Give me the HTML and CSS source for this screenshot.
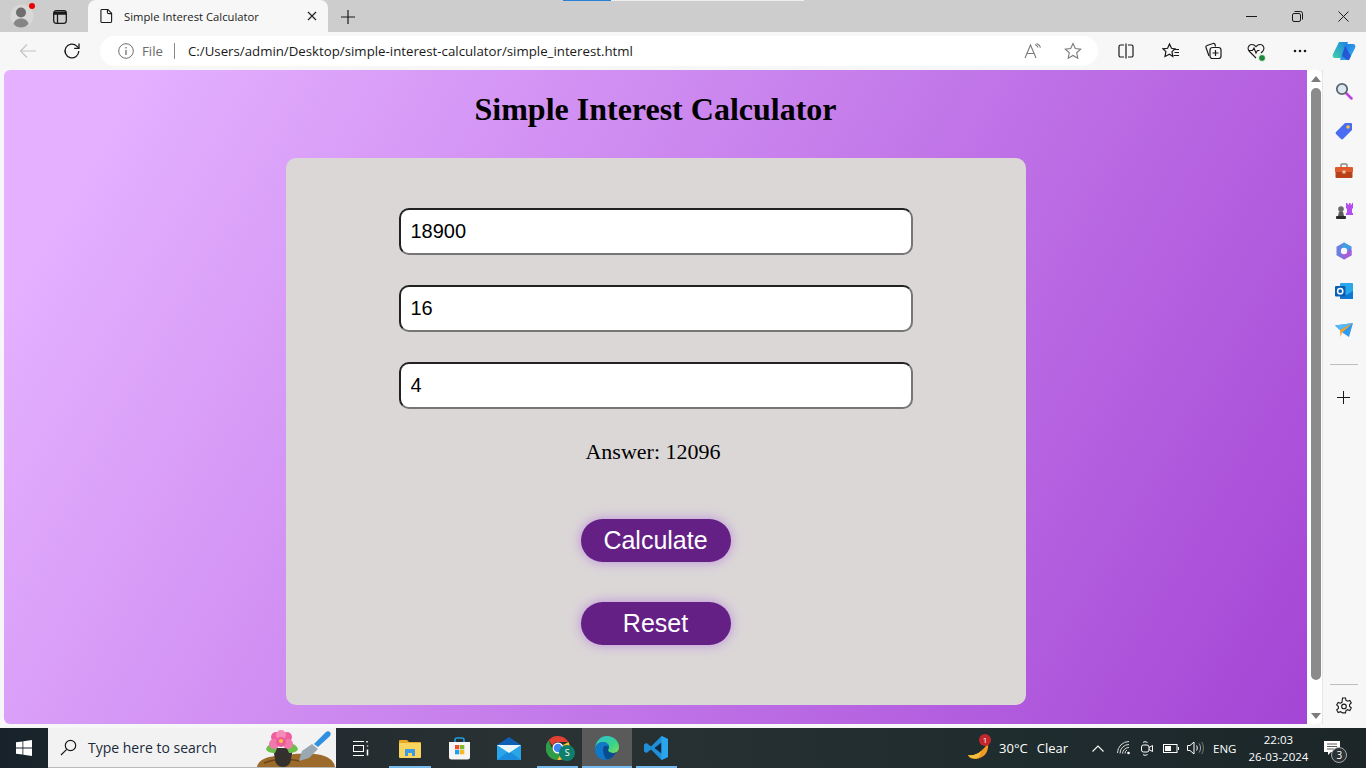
FILE: index.html
```html
<!DOCTYPE html>
<html lang="en">
<head>
    <meta charset="UTF-8">
    <title>Simple Interest Calculator</title>
    <link rel="stylesheet" href="styles.css">
</head>
<body>

<div class="tabstrip">
    <div class="load-strip"><span class="load-blue"></span><span class="load-gray"></span></div>
    <div class="avatar">
        <svg width="24" height="24" viewBox="0 0 24 24"><circle cx="12" cy="12" r="11.5" fill="#d8d8d8"/><circle cx="11" cy="8.5" r="5" fill="#6e6e6e"/><path d="M3.5 20c1-4 4-5.500 7.500-5.500s6.500 1.500 7.500 5.500c-2 2.500-4.500 3.500-7.500 3.500s-5.500-1-7.500-3.500z" fill="#868686"/></svg>
        <span class="avatar-dot"></span>
    </div>
    <div class="strip-btn">
        <svg width="16" height="16" viewBox="0 0 16 16" fill="none" stroke="#1a1a1a" stroke-width="1.300"><rect x="1.700" y="1.700" width="12.600" height="12.600" rx="2.500"/><path d="M1.700 5h12.600M5.500 5v9.300" /><path d="M2 2.500h12v2.500H2z" fill="#1a1a1a" stroke="none"/></svg>
    </div>
    <div class="tab">
        <svg width="13" height="16" viewBox="0 0 14 16" fill="none" stroke="#1a1a1a" stroke-width="1.200"><path d="M2 1h6.500L12.500 5v9a1 1 0 0 1-1 1h-9.500a1 1 0 0 1-1-1V2a1 1 0 0 1 1-1z"/><path d="M8 1v3a1.500 1.500 0 0 0 1.500 1.500h3"/></svg>
        <span class="tab-title">Simple Interest Calculator</span>
        <svg class="tab-close" width="10" height="10" viewBox="0 0 10 10" stroke="#222" stroke-width="1.200"><path d="M1 1l8 8M9 1l-8 8"/></svg>
    </div>
    <div class="new-tab">
        <svg width="14" height="14" viewBox="0 0 14 14" stroke="#1a1a1a" stroke-width="1.200"><path d="M7 0v14M0 7h14"/></svg>
    </div>
    <div class="window-btns">
        <div class="window-btn"><svg width="11" height="11" viewBox="0 0 11 11" stroke="#1a1a1a"><path d="M0 5.500h11"/></svg></div>
        <div class="window-btn"><svg width="11" height="11" viewBox="0 0 11 11" fill="none" stroke="#1a1a1a"><rect x=".500" y="2.500" width="8" height="8" rx="1.500"/><path d="M2.500 .500h6a2 2 0 0 1 2 2v6"/></svg></div>
        <div class="window-btn"><svg width="11" height="11" viewBox="0 0 11 11" stroke="#1a1a1a"><path d="M.500 .500l10 10M10.500 .500l-10 10"/></svg></div>
    </div>
</div>

<div class="toolbar">
    <div class="nav-btn nav-back">
        <svg width="18" height="16" viewBox="0 0 18 16" fill="none" stroke="#c4c4c4" stroke-width="1.200"><path d="M17 8H1.500M8 1.500L1.500 8 8 14.500"/></svg>
    </div>
    <div class="nav-btn nav-reload">
        <svg width="18" height="18" viewBox="0 0 18 18" fill="none" stroke="#1a1a1a" stroke-width="1.300"><path d="M15.800 9a6.900 6.900 0 1 1-2-4.900l2 2"/><path d="M16 1.500v4.800h-4.800"/></svg>
    </div>
    <div class="address">
        <svg class="info-icon" width="16" height="16" viewBox="0 0 16 16" fill="none" stroke="#6f6f6f"><circle cx="8" cy="8" r="7.300"/><path d="M8 7v5M8 4v1.500" stroke-width="1.300"/></svg>
        <span class="addr-file">File</span>
        <span class="addr-sep"></span>
        <span class="addr-url">C:/Users/admin/Desktop/simple-interest-calculator/simple_interest.html</span>
        <svg class="addr-read" width="18" height="16" viewBox="0 0 18 16" fill="none" stroke="#7a7a7a" stroke-width="1.100"><path d="M1 15L6.500 2 12 15M3 10.500h7"/><path d="M11 1.500c1.500.5 2.500 1.500 3 3M12.500 .5c2 .7 3.500 2 4 4"/></svg>
        <svg class="addr-star" width="18" height="18" viewBox="0 0 18 18" fill="none" stroke="#7a7a7a" stroke-width="1.100"><path d="M9 1.500l2.300 5 5.400.6-4 3.700 1.100 5.400L9 13.500l-4.800 2.700 1.100-5.400-4-3.700 5.400-.6z"/></svg>
    </div>
    <div class="tool-btns">
        <div class="tool-btn"><svg width="16" height="16" viewBox="0 0 16 16" fill="none" stroke="#1a1a1a" stroke-width="1.200"><path d="M6 2H2.500A1.500 1.500 0 0 0 1 3.500v9A1.500 1.500 0 0 0 2.500 14H6M10 2h3.500A1.500 1.500 0 0 1 15 3.500v9a1.500 1.500 0 0 1-1.500 1.500H10M8 .5v15"/></svg></div>
        <div class="tool-btn tool-fav"><svg width="18" height="18" viewBox="0 0 18 18" fill="none" stroke="#1a1a1a" stroke-width="1.200"><path d="M7.500 2l2 4.300 3.500.5-3 2.800.8 4.900-3.300-2.300-4.500 2.300.9-4.900L1 6.800l4.600-.5z"/><path d="M12 7.500h5M12.500 10.500h4.500M11.500 13.500h5.500"/></svg></div>
        <div class="tool-btn"><svg width="18" height="18" viewBox="0 0 18 18" fill="none" stroke="#1a1a1a" stroke-width="1.200"><path d="M5 14L2 5.500a1.500 1.500 0 0 1 1-2L9 1.500a1.500 1.500 0 0 1 2 1l.5 2"/><rect x="6" y="5.500" width="11" height="11" rx="2.500" fill="#f7f7f7"/><path d="M11.500 8v6M8.500 11h6"/></svg></div>
        <div class="tool-btn tool-health">
            <svg width="18" height="18" viewBox="0 0 18 18" fill="none" stroke="#1a1a1a" stroke-width="1.100"><path d="M9 16L2.500 9.500C0 7 1 2.500 5 2.500c2 0 3 1 4 2.200 1-1.200 2-2.200 4-2.200 4 0 5 4.500 2.500 7L14 11"/><path d="M1.500 8.500h4l1.500-2.500 2 5 1.500-2.500h2"/></svg>
            <span class="health-dot"></span>
        </div>
        <div class="tool-btn"><svg width="14" height="4" viewBox="0 0 14 4" fill="#1a1a1a"><circle cx="2" cy="2" r="1.300"/><circle cx="7" cy="2" r="1.300"/><circle cx="12" cy="2" r="1.300"/></svg></div>
        <div class="tool-btn copilot">
            <svg width="24" height="24" viewBox="0 0 24 24">
                <defs>
                    <linearGradient id="cpA" x1="0" y1="1" x2="1" y2="0"><stop offset="0" stop-color="#3fd1a8"/><stop offset="1" stop-color="#1b82e8"/></linearGradient>
                    <linearGradient id="cpB" x1="0" y1="0" x2="1" y2="1"><stop offset="0" stop-color="#1d6fe0"/><stop offset="1" stop-color="#37b8f2"/></linearGradient>
                </defs>
                <path d="M7 3h9l-5 14c-.5 1.500-1.500 2-3 2H3c-2 0-3-2-2-4z" fill="url(#cpA)"/>
                <path d="M17 21H8l5-14c.5-1.500 1.500-2 3-2h5c2 0 3 2 2 4z" fill="url(#cpB)"/>
                <path d="M13 7l-3 10 5 4h2l2-4z" fill="#2444c9" opacity=".75"/>
            </svg>
        </div>
    </div>
</div>

<div class="main">
    <div class="viewport">
        <div class="page">
            <h1>Simple Interest Calculator</h1>
            <div class="card">
                <input class="field" type="text" value="18900">
                <input class="field" type="text" value="16">
                <input class="field" type="text" value="4">
                <p class="answer">Answer: 12096</p>
                <button class="action">Calculate</button>
                <button class="action">Reset</button>
            </div>
        </div>
        <div class="scrollbar">
            <span class="arrow-up"></span>
            <span class="thumb"></span>
            <span class="arrow-down"></span>
        </div>
    </div>
    <div class="sidebar">
        <div class="side-btn"><svg width="18" height="18" viewBox="0 0 18 18"><path d="M11 11l5.500 5.500" stroke="#c03fe0" stroke-width="2.500" stroke-linecap="round"/><circle cx="7" cy="7" r="5.200" fill="#dbe6ee" stroke="#5c6670" stroke-width="1.800"/></svg></div>
        <div class="side-btn"><svg width="18" height="18" viewBox="0 0 18 18"><path d="M10 1h6a1 1 0 0 1 1 1v6l-9 9a1.500 1.500 0 0 1-2 0L1 12a1.500 1.500 0 0 1 0-2z" fill="#4a6cf2"/><circle cx="13" cy="5" r="1.800" fill="#f5c63c"/></svg></div>
        <div class="side-btn"><svg width="18" height="16" viewBox="0 0 18 16"><path d="M6 4V2a1 1 0 0 1 1-1h4a1 1 0 0 1 1 1v2" fill="none" stroke="#8a8a8a" stroke-width="1.500"/><rect y="4" width="18" height="5.500" rx="1" fill="#e0592a"/><rect x=".5" y="9" width="17" height="6" rx="1" fill="#b8401a"/><rect x="7.500" y="7.500" width="3" height="3" fill="#e8c8b0"/></svg></div>
        <div class="side-btn"><svg width="18" height="18" viewBox="0 0 18 18"><path d="M11 1h1.500v1.500H14V1h1.500v1.500H17V1h1v5l-1 1v4h1v2h-7v-2h1V7l-1-1z" fill="#b44cf0"/><circle cx="6" cy="7" r="2.800" fill="#6a6a6a"/><path d="M4 9.500h4l1 4.500H3z" fill="#5a5a5a"/><rect x="1" y="14" width="10" height="3" rx="1" fill="#2a2a2a"/></svg></div>
        <div class="side-btn">
            <svg width="18" height="18" viewBox="0 0 18 18">
                <path d="M9 .5l7.500 4.300v8.400L9 17.500 1.500 13.200V4.800z" fill="#6a7fe0"/>
                <path d="M9 .5l7.500 4.300L12 9 6 6z" fill="#3f9fe4"/>
                <path d="M16.500 8v5.200L9 17.500 6 12z" fill="#a65fd8"/>
                <circle cx="9" cy="9" r="3.200" fill="#f7f7f7"/>
            </svg>
        </div>
        <div class="side-btn"><svg width="18" height="18" viewBox="0 0 18 18"><rect x="5" y="1" width="13" height="16" rx="1" fill="#28a8ea"/><path d="M5 9l6.500 4 6.500-4v8H5z" fill="#0f78d4"/><rect y="4" width="10.500" height="10.500" rx="1" fill="#0a5fb4"/><circle cx="5.200" cy="9.200" r="2.600" fill="none" stroke="#fff" stroke-width="1.500"/></svg></div>
        <div class="side-btn"><svg width="18" height="16" viewBox="0 0 18 16"><path d="M0 2.500L18 0 14 14 8 10z" fill="#2f9bf0"/><path d="M0 2.500L18 0 5 7z" fill="#56b8f5"/><path d="M5 7L18 0 7 9.500 5.500 14z" fill="#f2a32a"/></svg></div>
        <span class="side-line side-line-top"></span>
        <div class="side-btn"><svg width="13" height="13" viewBox="0 0 13 13" stroke="#1a1a1a"><path d="M6.500 0v13M0 6.500h13"/></svg></div>
        <span class="side-line side-line-bottom"></span>
        <div class="side-gear"><svg width="18" height="18" viewBox="0 0 18 18" fill="none" stroke="#1a1a1a" stroke-width="1.100"><path d="M7.500 1h3l.5 2.300 1.600.9 2.200-.8 1.500 2.600-1.700 1.500v1.900l1.700 1.500-1.500 2.600-2.200-.8-1.600.9-.5 2.300h-3L7 15.600l-1.600-.9-2.200.8-1.500-2.600 1.700-1.500V9.500L1.700 8 3.200 5.400l2.200.8L7 5.300z"/><circle cx="9" cy="9.400" r="2.300"/></svg></div>
    </div>
</div>

<div class="taskbar">
    <div class="start">
        <svg width="16" height="16" viewBox="0 0 16 16" fill="#fff"><path d="M0 2.300l6.500-.9v6.200H0zM7.300 1.300L16 0v7.600H7.300zM0 8.400h6.500v6.200L0 13.700zM7.300 8.400H16V16l-8.700-1.300z"/></svg>
    </div>
    <div class="search">
        <svg width="17" height="17" viewBox="0 0 17 17" fill="none" stroke="#1a1a1a" stroke-width="1.200"><circle cx="10.500" cy="6.500" r="5.200"/><path d="M6.700 10.300L1 16"/></svg>
        <span class="search-text">Type here to search</span>
        <svg class="search-art" width="82" height="40" viewBox="0 0 82 40">
            <path d="M3 40c1-6 8-10 18-11 18-2 30-3 40-2 10 1 19 5 20 13z" fill="#9c6b2c"/>
            <path d="M10 36c10-4 24-4 36-2" fill="none" stroke="#6d4517" stroke-width="1.500"/>
            <path d="M72 5c3-2 6 1 4 4L64 20l-4-3z" fill="#2f8fe0"/>
            <path d="M58 17l6 5-9 9-10 3 3-10z" fill="#9aa8b4"/>
            <path d="M19 21h20l-2 11a8 8 0 0 1-16 0z" fill="#33302e"/>
            <path d="M12 22c2-6 8-6 12-3l-3 7c-4 0-8-1-9-4zM44 22c-2-6-8-6-12-3l3 7c4 0 8-1 9-4z" fill="#6cc04a"/>
            <circle cx="22" cy="10" r="5" fill="#ef5f9e"/>
            <circle cx="33" cy="10" r="5" fill="#ef5f9e"/>
            <circle cx="20" cy="17" r="5" fill="#f078ad"/>
            <circle cx="34" cy="17" r="5" fill="#f078ad"/>
            <circle cx="27" cy="8" r="5" fill="#f48ab8"/>
            <circle cx="27" cy="15" r="5" fill="#ee5a9a"/>
            <circle cx="27" cy="14" r="2" fill="#f5c63c"/>
        </svg>
    </div>
    <div class="task-icons">
        <div class="task-icon"><svg width="17" height="17" viewBox="0 0 17 17" fill="none" stroke="#fff"><rect x="1.500" y="5.500" width="10" height="6"/><path d="M1 1.500h11M1 15.500h11"/><path d="M15.500 5.500v1M15.500 9.500v6" stroke-width="1.500"/><path d="M15 1v1.500" stroke-width="1.500"/></svg></div>
        <div class="task-icon underlined"><svg width="22" height="20" viewBox="0 0 22 20"><path d="M0 3a1 1 0 0 1 1-1h7l2 2h11a1 1 0 0 1 1 1v3H0z" fill="#e9a825"/><rect y="5" width="22" height="15" rx="1" fill="#f7d560"/><path d="M6 18v-6a1 1 0 0 1 1-1h8a1 1 0 0 1 1 1v6h-3v-3H9v3z" fill="#3b9ae0"/></svg></div>
        <div class="task-icon"><svg width="23" height="23" viewBox="0 0 23 23"><path d="M7 6V3a2 2 0 0 1 2-2h5a2 2 0 0 1 2 2v3" fill="none" stroke="#1f9de0" stroke-width="1.600"/><path d="M1 5h21v15a2.500 2.500 0 0 1-2.500 2.500h-16A2.500 2.500 0 0 1 1 20z" fill="#f5f5f5"/><rect x="7" y="8" width="4.300" height="4.300" fill="#e8512c"/><rect x="12" y="8" width="4.300" height="4.300" fill="#7fba2a"/><rect x="7" y="13" width="4.300" height="4.300" fill="#1fa0e8"/><rect x="12" y="13" width="4.300" height="4.300" fill="#fbb81f"/></svg></div>
        <div class="task-icon"><svg width="24" height="23" viewBox="0 0 24 23"><path d="M12 0l12 8H0z" fill="#0f5fb4"/><path d="M0 8h24v15H0z" fill="#29a5ea"/><path d="M0 23l12-9 12 9z" fill="#1b8ddc"/><path d="M0 8h24l-12 8z" fill="#eaf6fd"/></svg></div>
        <div class="task-icon underlined chrome">
            <svg width="24" height="24" viewBox="0 0 24 24"><path d="M12 0a12 12 0 0 1 10.400 6H12a6 6 0 0 0-5.600 3.800L2.600 4.200A12 12 0 0 1 12 0z" fill="#e34133"/><path d="M22.400 6A12 12 0 0 1 11 24l5.200-8.800A6 6 0 0 0 17 9z" fill="#fbc02d"/><path d="M2.600 4.200A12 12 0 0 0 11 24l5-8.500A6 6 0 0 1 6.800 14z" fill="#2f9e47"/><circle cx="12" cy="12" r="5.500" fill="#fff"/><circle cx="12" cy="12" r="4.300" fill="#4285f4"/></svg>
            <span class="chrome-badge">S</span>
        </div>
        <div class="task-icon underlined active"><svg width="24" height="24" viewBox="0 0 24 24"><defs><linearGradient id="edA" x1="0" y1="0" x2="1" y2="1"><stop offset="0" stop-color="#2fc4d8"/><stop offset=".6" stop-color="#37d28a"/><stop offset="1" stop-color="#7ee05a"/></linearGradient></defs><path d="M12 0c7 0 12 5 12 11 0 4-3 6-6 6-3 0-5-1-5-3 0-1 1-1 1-3 0-3-3-5-6-5-4 0-8 3-8 8C0 6 5 0 12 0z" fill="url(#edA)"/><path d="M0 14c0-5 4-8 8-8 3 0 6 2 6 5 0 1-1 2-1 3 0 2 2 3 5 3 1 0 2 0 3-1-2 5-6 8-10 8-6 0-11-4-11-10z" fill="#0f78c8"/><path d="M8 13c0-3 2-4 5-3l1 1c0 1-1 2-1 3 0 2 2 3 5 3 1 0 2 0 3-1-2 5-6 8-10 7-2-3-3-6-3-10z" fill="#0b4c90"/></svg></div>
        <div class="task-icon underlined"><svg width="24" height="24" viewBox="0 0 24 24"><path d="M17.500 0L24 3v18l-6.500 3L7 13.500 2.500 17 0 15.500V8.500L2.500 7 7 10.500z" fill="#1f8fd8"/><path d="M17.500 6.500L10.500 12l7 5.500z" fill="#0f2a44"/><path d="M17.500 0L24 3v18l-6.500 3z" fill="#2ba6ec"/></svg></div>
    </div>
    <div class="tray">
        <div class="weather">
            <svg width="23" height="24" viewBox="0 0 23 24"><path d="M21 8c1 8-4 14-12 15-4 0-7-1-8-4 5 1 10-1 13-4 2-2 4-4 7-7z" fill="#f29a1f"/><path d="M1 19c5 1 10-1 13-4l-2 6c-3 2-8 2-11-2z" fill="#f6c042"/></svg>
            <span class="weather-badge">1</span>
        </div>
        <span class="tray-text temp">30°C</span>
        <span class="tray-text clear">Clear</span>
        <svg class="tray-up" width="12" height="7" viewBox="0 0 12 7" fill="none" stroke="#fff" stroke-width="1.100"><path d="M.5 6.500L6 1l5.500 5.500"/></svg>
        <svg class="tray-wifi" width="14" height="14" viewBox="0 0 14 14" fill="none" stroke="#ddd"><path d="M.5 12A11.500 11.500 0 0 1 12 .5M3 12.500a9 9 0 0 1 9-9M5.500 12.500A6.500 6.500 0 0 1 12 6.500M8 12.500a4 4 0 0 1 2-3.500"/><circle cx="11.500" cy="12" r="1.300" fill="#fff" stroke="none"/></svg>
        <svg class="tray-cam" width="12" height="17" viewBox="0 0 12 17" fill="none" stroke="#fff"><rect x=".5" y="5" width="7.500" height="7" rx="2"/><path d="M8 7.500l3.500-2v6l-3.500-2M2 2.500C3 1.500 5 1.500 6.500 2.500M2 14.500c1 1 3 1 4.500 0"/></svg>
        <svg class="tray-bat" width="16" height="9" viewBox="0 0 16 9" fill="none" stroke="#fff"><rect x=".5" y=".5" width="13.500" height="8"/><rect x="2" y="2" width="6" height="5" fill="#fff" stroke="none"/><path d="M15.500 3v3"/></svg>
        <svg class="tray-vol" width="17" height="14" viewBox="0 0 17 14" fill="none" stroke="#fff"><path d="M.5 4.500h2.500L7 1v12L3 9.500H.5z"/><path d="M9.500 4.500c1 1.500 1 3.500 0 5"/><path d="M12 2.500c2 2.500 2 6.500 0 9" opacity=".6"/><path d="M14.500 1c2.500 3 2.500 9 0 12" opacity=".4"/></svg>
        <span class="tray-text eng">ENG</span>
        <div class="clock"><span>22:03</span><span>26-03-2024</span></div>
        <div class="notify">
            <svg width="16" height="14" viewBox="0 0 16 14"><path d="M0 0h16v11H7l-3 3v-3H0z" fill="#fff"/><path d="M3 3h10M3 5.500h10M3 8h7" stroke="#333" stroke-width=".8"/></svg>
            <span class="notify-count">3</span>
        </div>
    </div>
</div>

</body>
</html>
```

FILE: styles.css
```css
* {
    box-sizing: border-box;
}

html, body {
    height: 100%;
}

body {
    margin: 0;
    display: flex;
    flex-direction: column;
    width: 1366px;
    height: 768px;
    overflow: hidden;
    font-family: 'Open Sans', 'Noto Sans', sans-serif;
    background-color: #f7f7f7;
}

/* browser top bar */
.tabstrip {
    height: 32px;
    background-color: #cdcdcd;
    display: flex;
    align-items: flex-end;
    position: relative;
    flex-shrink: 0;
}

.load-strip {
    position: absolute;
    top: 0;
    left: 563px;
    display: flex;
    height: 1px;
}

.load-blue {
    width: 48px;
    background-color: #2a7fd6;
}

.load-gray {
    width: 193px;
    background-color: #eeeeee;
}

.avatar {
    width: 24px;
    height: 24px;
    margin: 0 0 4px 10px;
    position: relative;
}

.avatar-dot {
    position: absolute;
    top: -1px;
    right: -1px;
    width: 6px;
    height: 6px;
    border-radius: 50%;
    background-color: #e80000;
}

.strip-btn {
    width: 16px;
    height: 16px;
    margin: 0 20px 8px 18px;
}

.tab {
    width: 240px;
    height: 32px;
    background-color: #f7f7f7;
    border-radius: 8px 8px 0 0;
    display: flex;
    align-items: center;
    padding: 0 11px 0 12px;
    font-size: 11.250px;
    color: #1a1a1a;
}

.tab-title {
    margin-left: 11px;
    flex: 1;
    white-space: nowrap;
}

.new-tab {
    margin: 0 0 11px 13px;
    height: 14px;
}

.window-btns {
    margin-left: auto;
    display: flex;
    align-self: stretch;
}

.window-btn {
    width: 46px;
    display: flex;
    align-items: center;
    justify-content: center;
}

/* address bar row */
.toolbar {
    height: 38px;
    background-color: #f7f7f7;
    display: flex;
    align-items: center;
    flex-shrink: 0;
}

.nav-btn {
    display: flex;
    align-items: center;
    justify-content: center;
    width: 44px;
    height: 30px;
}

.nav-back {
    margin-left: 6px;
}

.address {
    width: 998px;
    height: 30px;
    margin: 0 0 0 6px;
    background-color: #fff;
    border-radius: 15px;
    display: flex;
    align-items: center;
    padding-left: 18px;
    font-size: 13.250px;
    white-space: nowrap;
}

.addr-file {
    margin-left: 8px;
    color: #6a6a6a;
}

.addr-sep {
    width: 1px;
    height: 16px;
    margin: 0 13px 0 11px;
    background-color: #8a8a8a;
}

.addr-url {
    color: #1a1a1a;
}

.addr-read {
    margin-left: auto;
}

.addr-star {
    margin: 0 16px 0 22px;
}

.tool-btns {
    display: flex;
    align-items: center;
    margin-left: 6px;
}

.tool-btn {
    width: 43.500px;
    height: 30px;
    display: flex;
    align-items: center;
    justify-content: center;
    position: relative;
}

.tool-fav svg {
    margin-left: 4px;
}

.tool-health .health-dot {
    position: absolute;
    right: 12px;
    bottom: 4px;
    width: 8px;
    height: 8px;
    border-radius: 50%;
    background-color: #1c8a3a;
    border: 1px solid #f7f7f7;
}

.copilot {
    margin-left: 1px;
}

/* page area */
.main {
    flex: 1;
    display: flex;
    min-height: 0;
}

.viewport {
    width: 1322px;
    margin-bottom: 4px;
    padding-left: 4px;
    display: flex;
    min-height: 0;
}

.page {
    width: 1303px;
    background: linear-gradient(120deg, #e4b0ff 8%, #a445d5 100%);
    border-radius: 6px 0 0 6px;
    padding-top: 21px;
    overflow: hidden;
}

.page h1 {
    margin: 0 0 31px 0;
    font-family: 'Liberation Serif', serif;
    font-size: 32px;
    line-height: 36px;
    font-weight: bold;
    text-align: center;
    color: #000;
}

.card {
    width: 740px;
    height: 547px;
    margin: 0 auto;
    padding-top: 50px;
    background-color: #dbd7d7;
    border-radius: 10px;
    display: flex;
    flex-direction: column;
    align-items: center;
}

.field {
    width: 514px;
    height: 47px;
    margin-bottom: 30px;
    padding: 0 10px;
    border-width: 2px;
    border-style: solid;
    border-color: #222222 #767676 #767676 #222222;
    border-radius: 10px;
    background-color: #fff;
    font-family: 'Liberation Sans', sans-serif;
    font-size: 20px;
    color: #000;
    outline: none;
}

.answer {
    margin: 0 5px 0 0;
    height: 25px;
    line-height: 25px;
    font-family: 'Liberation Serif', serif;
    font-size: 22px;
    color: #000;
}

.action {
    width: 150px;
    height: 43px;
    margin-top: 0;
    margin-bottom: 40px;
    border: none;
    border-radius: 22px;
    background-color: #652086;
    box-shadow: 0 0 12px rgba(170, 90, 220, 0.6);
    font-family: 'Liberation Sans', sans-serif;
    font-size: 25px;
    color: #fff;
    cursor: pointer;
}

.answer + .action {
    margin-top: 55px;
}

.scrollbar {
    width: 15px;
    background-color: #fff;
    border-radius: 0 6px 6px 0;
    display: flex;
    flex-direction: column;
    align-items: center;
    padding: 6px 0 5px 3px;
}

.arrow-up, .arrow-down {
    width: 0;
    height: 0;
    border-left: 5px solid transparent;
    border-right: 5px solid transparent;
}

.arrow-up {
    border-bottom: 6px solid #7c7c7c;
}

.arrow-down {
    border-top: 6px solid #7c7c7c;
}

.thumb {
    width: 10px;
    flex: 1;
    margin: 6px 0 33px 0;
    background-color: #8b8b8b;
    border-radius: 5px;
}

/* right edge sidebar */
.sidebar {
    width: 44px;
    border-left: 1px solid #e6e6e6;
    margin-bottom: 4px;
    display: flex;
    flex-direction: column;
    align-items: center;
    padding: 1px 2px 0 0;
}

.side-btn {
    height: 40px;
    width: 100%;
    display: flex;
    align-items: center;
    justify-content: center;
}

.side-line {
    width: 28px;
    height: 1px;
    background-color: #bdbdbd;
    flex-shrink: 0;
}

.side-line-top {
    margin: 13px 0 12px 0;
}

.side-line-bottom {
    margin-top: auto;
}

.side-gear {
    height: 18px;
    margin: 12px 0 9px 0;
}

/* windows taskbar */
.taskbar {
    height: 40px;
    background: linear-gradient(90deg, #18222a 0%, #2a3233 40%, #1f2c2e 75%, #1c2629 100%);
    display: flex;
    flex-shrink: 0;
    color: #fff;
}

.start {
    width: 48px;
    display: flex;
    align-items: center;
    justify-content: center;
}

.search {
    width: 288px;
    background-color: #f2f2f2;
    border-bottom: 1px solid #b9b9b9;
    display: flex;
    align-items: center;
    padding-left: 12px;
    position: relative;
    font-size: 14px;
    color: #1a2a3a;
}

.search-text {
    margin-left: 11px;
}

.search-art {
    position: absolute;
    right: 0;
    bottom: 0;
}

.task-icons {
    display: flex;
}

.task-icon {
    width: 49.300px;
    display: flex;
    align-items: center;
    justify-content: center;
    position: relative;
}

.task-icon.underlined::after {
    content: '';
    position: absolute;
    left: 4px;
    right: 4px;
    bottom: 0;
    height: 2px;
    background-color: #76b9ed;
}

.task-icon.active {
    background-color: #5a5a5a;
}

.task-icon.active::after {
    left: 0;
    right: 0;
}

.chrome-badge {
    position: absolute;
    left: 26px;
    top: 17px;
    width: 16px;
    height: 16px;
    border-radius: 50%;
    background-color: #0f7f6c;
    color: #fff;
    font-size: 9px;
    line-height: 16px;
    text-align: center;
}

.tray {
    flex: 1;
    display: flex;
    align-items: center;
    position: relative;
    font-size: 13px;
    color: #fff;
    padding-left: 286px;
    white-space: nowrap;
}

.weather {
    position: relative;
    width: 23px;
    height: 24px;
}

.weather-badge {
    position: absolute;
    top: -2px;
    right: -1px;
    width: 12px;
    height: 12px;
    border-radius: 50%;
    background-color: #c4262e;
    font-size: 8px;
    line-height: 12px;
    text-align: center;
}

.temp {
    margin-left: 9px;
}

.clear {
    margin-left: 9px;
}

.tray-up {
    margin-left: 24px;
}

.tray-wifi {
    margin-left: 13px;
}

.tray-cam {
    margin-left: 10px;
}

.tray-bat {
    margin-left: 10px;
}

.tray-vol {
    margin-left: 8px;
}

.eng {
    margin-left: 9px;
    font-size: 11.500px;
}

.clock {
    margin-left: 11px;
    width: 62px;
    display: flex;
    flex-direction: column;
    align-items: center;
    font-size: 11.500px;
    line-height: 17px;
}

.notify {
    margin-left: 15px;
    position: relative;
    height: 14px;
    width: 16px;
}

.notify-count {
    position: absolute;
    left: 7px;
    top: 6px;
    width: 16px;
    height: 16px;
    border-radius: 50%;
    border: 1px solid #aaa;
    background-color: #2b3335;
    font-size: 10px;
    line-height: 14px;
    text-align: center;
}
```
